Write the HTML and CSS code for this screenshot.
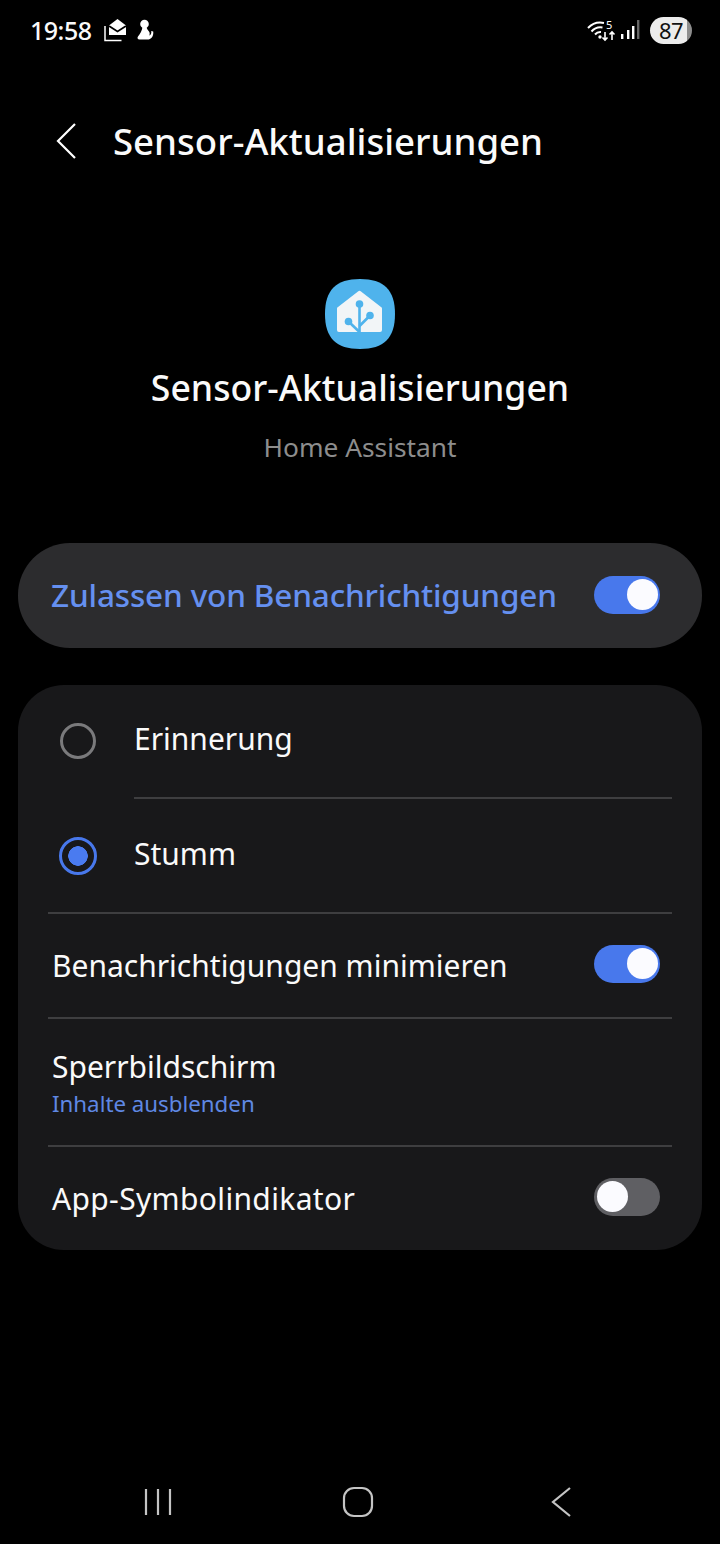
FILE: index.html
```html
<!DOCTYPE html>
<html lang="de">
<head>
    <meta charset="UTF-8">
    <meta name="viewport" content="width=device-width, initial-scale=1.0">
    <title>Sensor-Aktualisierungen</title>
    <link rel="stylesheet" href="styles.css">
</head>
<body>
    <div class="screen">
        <div class="status-bar">
            <div class="status-left">
                <span class="clock">19:58</span>
                <svg class="icon-mail" width="24" height="24" viewBox="0 0 24 24">
                    <path fill="#fff" d="M5 7.500 13.500 1 22 7.500V17H5Z"/>
                    <path fill="none" stroke="#000" stroke-width="1.800" d="M5 8 13.500 13.500 22 8"/>
                    <path fill="none" stroke="#fff" stroke-width="1.500" d="M1 8v14.500H17.500"/>
                </svg>
                <svg class="icon-seal" width="18" height="22" viewBox="0 0 18 22">
                    <circle cx="7.500" cy="5" r="4.300" fill="#fff"/>
                    <path fill="#fff" d="M5.500 8h4c.3 2 1.500 3 2.500 4.500 1 1.500.8 3 .2 4 1.500-.5 2.500-2 2-4.500l2 .5c.5 3.500-1 7-4.500 8H2.500C.5 20.500 0 19 1 17.500 3 15 5 12 5.500 8Z"/>
                </svg>
            </div>
            <div class="status-right">
                <svg class="icon-wifi" width="29" height="30" viewBox="0 -4 29 30">
                    <g fill="none" stroke="#fff" stroke-width="2">
                        <path d="M1 9A17 17 0 0 1 17 4"/>
                        <path d="M4.500 12.500A12 12 0 0 1 15.500 8.500"/>
                        <path d="M8 15.500A7 7 0 0 1 14 13"/>
                    </g>
                    <circle cx="13" cy="18" r="1.700" fill="#fff"/>
                    <path fill="none" stroke="#fff" stroke-width="1.600" d="M18 13v8M15.500 18.500 18 21 20.500 18.500M25 21v-8M22.500 15.500 25 13 27.500 15.500"/>
                    <text x="19" y="10" class="wifi-five">5</text>
                </svg>
                <svg class="icon-signal" width="20" height="20" viewBox="0 0 20 20">
                    <rect x="1" y="14" width="2.400" height="5" fill="#fff"/>
                    <rect x="7" y="10" width="2.400" height="9" fill="#fff"/>
                    <rect x="12" y="6" width="2.400" height="13" fill="#fff"/>
                    <rect x="17" y="0" width="2.400" height="19" fill="#666"/>
                </svg>
                <span class="battery">87</span>
            </div>
        </div>

        <header class="top-bar">
            <svg class="back" width="24" height="36" viewBox="0 0 24 36">
                <path fill="none" stroke="#fff" stroke-width="2.200" d="M20 1 3 18 20 35"/>
            </svg>
            <h1>Sensor-Aktualisierungen</h1>
        </header>

        <section class="app-info">
            <svg class="app-icon" width="72" height="72" viewBox="0 0 72 72">
                <path fill="#4fb3ec" d="M36 1C60 1 71 12 71 36S60 71 36 71 1 60 1 36 12 1 36 1Z"/>
                <path fill="#f2f5f7" d="M34 13.500a2 2 0 0 1 3 0L57 29a2 2 0 0 1 1 1.500V52a2 2 0 0 1-2 2H15a2 2 0 0 1-2-2V30.500A2 2 0 0 1 14 29Z"/>
                <g fill="none" stroke="#4fb3ec" stroke-width="2.600">
                    <path d="M35.500 54V26"/>
                    <path d="M35.500 48 46 37.500"/>
                    <path d="M35.500 54 24.500 43.500"/>
                </g>
                <g fill="#4fb3ec">
                    <circle cx="35.500" cy="26" r="3.800"/>
                    <circle cx="46" cy="37.500" r="3.800"/>
                    <circle cx="24.500" cy="43.500" r="3.800"/>
                </g>
            </svg>
            <div class="app-title">Sensor-Aktualisierungen</div>
            <div class="app-sub">Home Assistant</div>
        </section>

        <div class="allow-card">
            <span class="allow-label">Zulassen von Benachrichtigungen</span>
            <span class="switch on"></span>
        </div>

        <div class="list-card">
            <div class="row radio-row first">
                <span class="radio"></span>
                <span class="row-text">Erinnerung</span>
            </div>
            <div class="row radio-row second">
                <span class="radio checked"></span>
                <span class="row-text">Stumm</span>
            </div>
            <div class="row minimize">
                <span class="row-text">Benachrichtigungen minimieren</span>
                <span class="switch on"></span>
            </div>
            <div class="row lock">
                <div>
                    <div class="row-text">Sperrbildschirm</div>
                    <div class="row-sub">Inhalte ausblenden</div>
                </div>
            </div>
            <div class="row badge">
                <span class="row-text wide">App-Symbolindikator</span>
                <span class="switch"></span>
            </div>
        </div>

        <nav class="nav-bar">
            <svg width="28" height="28" viewBox="0 0 28 28">
                <path fill="none" stroke="#c4c4c4" stroke-width="2.200" d="M2 1v26M14 1v26M26 1v26"/>
            </svg>
            <svg class="nav-home" width="32" height="32" viewBox="0 0 32 32">
                <rect x="2" y="2" width="28" height="28" rx="10" fill="none" stroke="#c4c4c4" stroke-width="2.200"/>
            </svg>
            <svg class="nav-back" width="22" height="32" viewBox="0 0 22 32">
                <path fill="none" stroke="#c4c4c4" stroke-width="2.200" d="M20 2 3 16 20 30"/>
            </svg>
        </nav>
    </div>
</body>
</html>
```
FILE: styles.css
```css
* {
    box-sizing: border-box;
}
body {
    margin: 0;
    background-color: #000;
    color: #fafafa;
    font-family: "Noto Sans", sans-serif;
}
.screen {
    width: 720px;
    height: 1544px;
    display: flex;
    flex-direction: column;
    overflow: hidden;
}
.status-bar {
    height: 60px;
    padding: 0 28px 0 30px;
    display: flex;
    justify-content: space-between;
    align-items: center;
}
.status-left,
.status-right {
    display: flex;
    align-items: center;
}
.clock {
    font-size: 25px;
    font-weight: 500;
    letter-spacing: -0.5px;
    margin-right: 12px;
}
.icon-mail {
    margin-right: 9px;
}
.wifi-five {
    font-size: 11px;
    fill: #fff;
    font-family: "Noto Sans", sans-serif;
}
.icon-wifi {
    margin-right: 4px;
}
.icon-signal {
    margin-right: 10px;
}
.battery {
    width: 42px;
    height: 27px;
    border-radius: 14px;
    background: linear-gradient(to right, #ececec 88%, #8d8d8d 88%);
    color: #111;
    font-size: 22px;
    letter-spacing: -0.5px;
    line-height: 27px;
    text-align: center;
}
.top-bar {
    height: 162px;
    padding-left: 55px;
    display: flex;
    align-items: center;
}
.top-bar h1 {
    margin: 0 0 0 34px;
    font-size: 36.6px;
    font-weight: 500;
}
.app-info {
    height: 321px;
    padding-top: 56px;
    display: flex;
    flex-direction: column;
    align-items: center;
}
.app-title {
    margin-top: 12px;
    font-size: 35.6px;
    font-weight: 500;
    line-height: 50px;
}
.app-sub {
    margin-top: 16px;
    font-size: 26.3px;
    line-height: 38px;
    color: #8d8d8d;
}
.allow-card {
    height: 105px;
    margin: 0 18px;
    padding: 0 42px 2px 33px;
    background-color: #2c2c2e;
    border-radius: 52px;
    display: flex;
    justify-content: space-between;
    align-items: center;
}
.allow-label {
    font-size: 31.5px;
    font-weight: 500;
    letter-spacing: -0.15px;
    color: #6590f0;
}
.switch {
    position: relative;
    width: 66px;
    height: 38px;
    border-radius: 19px;
    background-color: #5f5f63;
    flex-shrink: 0;
}
.switch::after {
    content: "";
    position: absolute;
    top: 3px;
    left: 3px;
    width: 31px;
    height: 31px;
    border-radius: 50%;
    background-color: #fbfbff;
}
.switch.on {
    background-color: #4878ec;
}
.switch.on::after {
    left: 33px;
}
.list-card {
    height: 565px;
    margin: 37px 18px 0;
    background-color: #18181a;
    border-radius: 46px;
    overflow: hidden;
}
.row {
    position: relative;
    display: flex;
    justify-content: space-between;
    align-items: center;
    padding: 0 42px 0 34px;
}
.row::after {
    content: "";
    position: absolute;
    left: 30px;
    right: 30px;
    bottom: 0;
    height: 2px;
    background-color: #3e3e40;
}
.row.badge::after {
    display: none;
}
.row-text {
    font-size: 30px;
    line-height: 42px;
}
.minimize .row-text,
.badge .row-text {
    margin-top: 4px;
}
.row-text.wide {
    letter-spacing: 0.35px;
}
.lock .row-text {
    margin-top: 2px;
}
.row-sub {
    font-size: 22.3px;
    line-height: 32px;
    color: #5f88e4;
}
.radio-row {
    justify-content: flex-start;
    padding-left: 42px;
}
.first {
    height: 114px;
    padding-bottom: 6px;
}
.first::after {
    left: 116px;
}
.second {
    height: 115px;
    padding-bottom: 6px;
}
.minimize {
    height: 105px;
    padding-bottom: 6px;
}
.lock {
    height: 128px;
    padding-bottom: 2px;
}
.badge {
    height: 103px;
    padding-bottom: 4px;
}
.radio {
    width: 36px;
    height: 36px;
    margin: 4px 38px 0 0;
    border: 3px solid #7a7a7c;
    border-radius: 50%;
}
.radio.checked {
    width: 38px;
    height: 38px;
    margin: 4px 37px 0 -1px;
    border: 3.5px solid #4878ec;
    background: radial-gradient(circle, #4a7bf0 0 9.5px, transparent 10px);
}
.nav-bar {
    height: 42px;
    margin-top: 231px;
    padding-left: 144px;
    display: flex;
    align-items: center;
}
.nav-home {
    margin-left: 170px;
}
.nav-back {
    margin-left: 176px;
}
```
